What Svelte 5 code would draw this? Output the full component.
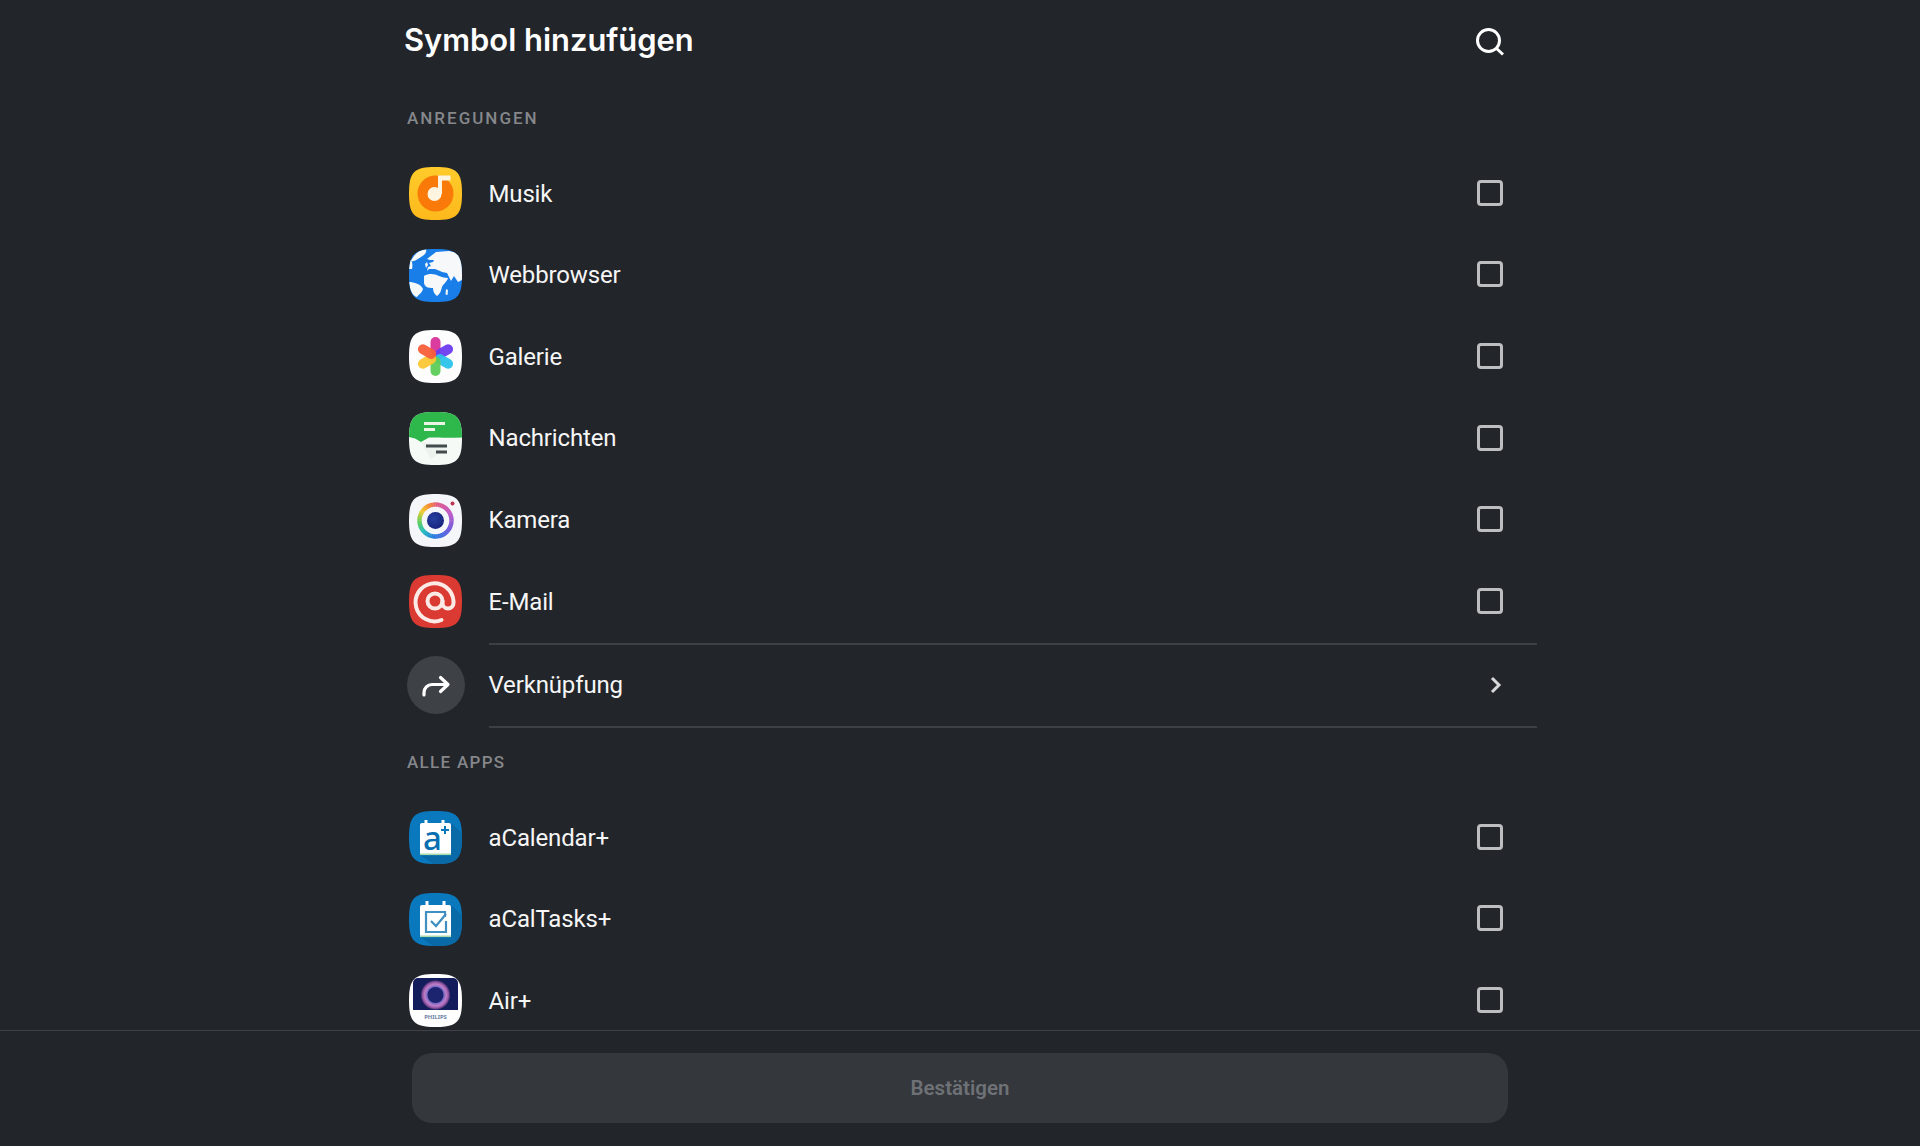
<script>
  const suggested = [
    { id: 'music', name: 'Musik' },
    { id: 'web', name: 'Webbrowser' },
    { id: 'gallery', name: 'Galerie' },
    { id: 'messages', name: 'Nachrichten' },
    { id: 'camera', name: 'Kamera' },
    { id: 'mail', name: 'E-Mail' }
  ];
  const apps = [
    { id: 'acal', name: 'aCalendar+' },
    { id: 'atasks', name: 'aCalTasks+' },
    { id: 'air', name: 'Air+' }
  ];
  const petals = [
    { a: 0, c: '#d9329b' },
    { a: 60, c: '#6b3cf0' },
    { a: 120, c: '#2cc3ea' },
    { a: 180, c: '#5dcc58' },
    { a: 240, c: '#fbc734' },
    { a: 300, c: '#f85f3a' }
  ];
  const stops = [
    [0, [226, 90, 130]], [60, [190, 90, 200]], [120, [110, 90, 220]], [180, [40, 120, 225]],
    [225, [40, 190, 190]], [260, [90, 205, 90]], [300, [240, 205, 50]], [335, [245, 135, 50]], [360, [226, 90, 130]]
  ];
  function colorAt(d) {
    for (let i = 1; i < stops.length; i++) {
      if (d <= stops[i][0]) {
        const [d0, c0] = stops[i - 1];
        const [d1, c1] = stops[i];
        const t = (d - d0) / (d1 - d0);
        return `rgb(${c0.map((v, k) => Math.round(v + (c1[k] - v) * t)).join(',')})`;
      }
    }
    return 'rgb(226,90,130)';
  }
  const ringSegments = Array.from({ length: 48 }, (_, i) => {
    const a0 = (i * 7.5 - 90) * Math.PI / 180;
    const a1 = ((i + 1.15) * 7.5 - 90) * Math.PI / 180;
    const r = 16;
    return {
      d: `M${26.5 + r * Math.cos(a0)} ${26.5 + r * Math.sin(a0)}A${r} ${r} 0 0 1 ${26.5 + r * Math.cos(a1)} ${26.5 + r * Math.sin(a1)}`,
      c: colorAt(i * 7.5)
    };
  });
</script>

<svg class="defs" width="0" height="0" aria-hidden="true">
  <defs>
    <clipPath id="sq"><path d="M0 26.5C0 5 5 0 26.5 0S53 5 53 26.5 48 53 26.5 53 0 48 0 26.5z" /></clipPath>
    <linearGradient id="gold" x1="0" y1="0" x2="0" y2="1"><stop offset="0" stop-color="#ffcb2b" /><stop offset="1" stop-color="#fdb91c" /></linearGradient>
    <radialGradient id="core" cx="0.4" cy="0.4" r="0.7"><stop offset="0" stop-color="#27409f" /><stop offset="1" stop-color="#16207a" /></radialGradient>
    <radialGradient id="glow" cx="0.5" cy="0.5" r="0.5">
      <stop offset="0.5" stop-color="#5f63c4" />
      <stop offset="0.72" stop-color="#c07fc8" />
      <stop offset="0.88" stop-color="#8a4f9c" />
      <stop offset="1" stop-color="#141d5c" />
    </radialGradient>
  </defs>
</svg>

{#snippet icon(id)}
  <svg class="app-icon" viewBox="0 0 53 53" aria-hidden="true">
    <g clip-path="url(#sq)">
      {#if id === 'music'}
        <rect width="53" height="53" fill="url(#gold)" />
        <circle cx="26.500" cy="26.500" r="18" fill="#f97a08" />
        <circle cx="25.500" cy="27" r="7" fill="#fff4e0" />
        <path d="M29 27V8.500h12.500v5H33V27z" fill="#fff4e0" />
      {:else if id === 'web'}
        <rect width="53" height="53" fill="#1a7ee8" />
        <g fill="#f6f8fa">
          <path d="M2 12C5 6 9 1 17 0c1 3-1 6-5 8S6 13 2 12z" />
          <path d="M0 9c3 2 4 6 3 11H0z" />
          <path d="M18 10l9-7 13-1 13 3v26l-4 2-4-6-3 5-4-8-5-1-2-1-5-2h-6l-2 2 1-4 3-1-2-3 4-1 1-2-4 0z" />
          <path d="M15 27c5-3 11-2 15 0 3 1 6 2 9 2-1 4-5 6-6 9s-1 6-5 9c-3-2-4-5-4-8-5 0-9-1-9-6 0-2 0-4 0-6z" />
          <path d="M0 33c5 0 12 2 14 7-1 4-4 5-6 8-4-1-7-6-8-15z" />
          <path d="M37 40l2 1-.5 5-2-.5z" />
          <path d="M16 15l2-2 1 3-2 3z" />
        </g>
      {:else if id === 'gallery'}
        <rect width="53" height="53" fill="#fdfdfd" />
        {#each petals as p}
          <rect x="21.500" y="7" width="10" height="19.500" rx="5" fill={p.c} opacity="0.95" transform="rotate({p.a} 26.500 26.500)" />
        {/each}
      {:else if id === 'messages'}
        <rect width="53" height="53" fill="#f6faf7" />
        <path d="M12 30l10 17 18-13z" fill="#ecf2ee" />
        <path d="M0 0H53V25.500C40 26 28 25.500 20 25.500L12 30 6 26.500 0 25z" fill="#2eb84b" />
        <path d="M15 11.500h21M15 17.500h11" stroke="#eaf5e6" stroke-width="3" fill="none" />
        <path d="M17 34h21M27 40h11" stroke="#434b4c" stroke-width="3" fill="none" />
      {:else if id === 'camera'}
        <rect width="53" height="53" fill="#f5f6f9" />
        {#each ringSegments as s}
          <path d={s.d} stroke={s.c} stroke-width="4.400" fill="none" />
        {/each}
        <circle cx="26.500" cy="26.500" r="8.500" fill="url(#core)" />
        <circle cx="43.500" cy="9.500" r="2" fill="#c2334f" />
      {:else if id === 'mail'}
        <rect width="53" height="53" fill="#da3a31" />
        <circle cx="26" cy="26" r="7.500" fill="none" stroke="#fbeae6" stroke-width="4" />
        <path d="M32.500 45A19 19 0 1 1 44.500 26v2a5 5 0 0 1-11 0V26" fill="none" stroke="#fbeae6" stroke-width="4" stroke-linecap="round" />
      {:else if id === 'acal'}
        <rect width="53" height="53" fill="#0a78bd" />
        <path d="M42 44 53 53H24L11 44zM42 12 53 22V53L42 44z" fill="#0a6aa8" />
        <path d="M17 12V9M34 12V9" stroke="#fff" stroke-width="3" />
        <rect x="11" y="12" width="31" height="32" rx="2" fill="#fff" />
        <rect x="11" y="42.500" width="31" height="1.600" fill="#a8dcae" />
        <text x="14" y="39" class="letter">a</text>
        <path d="M36 15v8M32 19h8" stroke="#0a78bd" stroke-width="2" />
      {:else if id === 'atasks'}
        <rect width="53" height="53" fill="#0a78bd" />
        <path d="M42 44 53 53H24L11 44zM42 12 53 22V53L42 44z" fill="#0a6aa8" />
        <path d="M18 12V8M35 12V8" stroke="#fff" stroke-width="3" />
        <rect x="11" y="12" width="31" height="32" rx="2" fill="#fff" />
        <rect x="11" y="42.500" width="31" height="1.600" fill="#a8dcae" />
        <path d="M36 24v-5H17v20h20V28" fill="none" stroke="#3f8fc0" stroke-width="2.200" />
        <path d="M22 28l5 5 10-12" fill="none" stroke="#3f8fc0" stroke-width="2.200" />
      {:else if id === 'air'}
        <rect width="53" height="53" fill="#fff" />
        <path d="M4 9a5 5 0 0 1 5-5h35a5 5 0 0 1 5 5v27H20C12 36 4 36 4 36z" fill="#141d5c" />
        <circle cx="26.500" cy="21" r="15" fill="url(#glow)" />
        <circle cx="26.500" cy="21" r="8" fill="#1c2470" />
        <text x="26.500" y="45" class="brand" text-anchor="middle">PHILIPS</text>
      {/if}
    </g>
  </svg>
{/snippet}

{#snippet row(item)}
  <div class="row">
    <span class="slot">{@render icon(item.id)}</span>
    <span class="name">{item.name}</span>
    <span class="check"></span>
  </div>
{/snippet}

<div class="page">
  <div class="main">
    <header class="head">
      <h1>Symbol hinzufügen</h1>
      <svg class="search" viewBox="0 0 30 30" aria-label="Suchen">
        <circle cx="13.500" cy="13.500" r="11" fill="none" stroke="#fff" stroke-width="3" />
        <path d="M21 21l7 6.500" stroke="#fff" stroke-width="3" fill="none" />
      </svg>
    </header>

    <h2 class="section first">ANREGUNGEN</h2>
    {#each suggested as item}
      {@render row(item)}
    {/each}

    <div class="sep"></div>
    <div class="row link">
      <span class="slot">
        <span class="round">
          <svg viewBox="0 0 58 58" width="58" height="58" aria-hidden="true">
            <path d="M17 39v-2.500a8 8 0 0 1 8-8h15" fill="none" stroke="#fff" stroke-width="3.200" stroke-linecap="round" />
            <path d="M33.500 21.500l7.500 7-7.500 7" fill="none" stroke="#fff" stroke-width="3.200" stroke-linecap="round" stroke-linejoin="round" />
          </svg>
        </span>
      </span>
      <span class="name">Verknüpfung</span>
      <svg class="chev" viewBox="0 0 12 18" aria-hidden="true">
        <path d="M2 2l7 7-7 7" fill="none" stroke="#d6d7d9" stroke-width="3" />
      </svg>
    </div>
    <div class="sep"></div>

    <h2 class="section second">ALLE APPS</h2>
    {#each apps as item}
      {@render row(item)}
    {/each}
  </div>

  <footer class="foot">
    <button class="confirm" disabled>Bestätigen</button>
  </footer>
</div>

<style>
  :global(body) {
    margin: 0;
    background: #22252a;
  }
  .defs {
    position: absolute;
  }
  .page {
    height: 1146px;
    display: flex;
    flex-direction: column;
    background: #22252a;
    color: #f6f6f6;
    font-family: Roboto, sans-serif;
    overflow: hidden;
  }
  .main {
    flex: 1;
    min-height: 0;
    overflow: hidden;
    padding: 0 383px 0 404px;
  }
  .head {
    height: 80px;
    display: flex;
    align-items: center;
    justify-content: space-between;
    padding-right: 32px;
  }
  h1 {
    margin: 0 0 2px;
    font-family: Inter, sans-serif;
    font-size: 30.900px;
    font-weight: 600;
    color: #fff;
  }
  .search {
    width: 30px;
    height: 30px;
    margin-top: 4px;
  }
  .section {
    margin: 0;
    display: flex;
    align-items: center;
    padding-left: 3px;
    font-size: 17px;
    font-weight: 500;
    letter-spacing: 1.300px;
    color: #85878b;
  }
  .first {
    height: 72.700px;
    box-sizing: border-box;
    padding-top: 3px;
    letter-spacing: 2px;
  }
  .second {
    height: 68.800px;
    box-sizing: border-box;
    padding-bottom: 1px;
  }
  .row {
    height: 81.670px;
    display: flex;
    align-items: center;
  }
  .link {
    height: 81.300px;
  }
  .slot {
    width: 84.500px;
    flex: none;
    display: flex;
    align-items: center;
  }
  .app-icon {
    width: 53px;
    height: 53px;
    margin-left: 5px;
    display: block;
  }
  .letter {
    font-family: "Noto Sans", sans-serif;
    font-size: 33px;
    font-weight: 500;
    fill: #0a6fb0;
  }
  .brand {
    font-family: "Noto Sans", sans-serif;
    font-size: 5.800px;
    font-weight: 700;
    fill: #6c7ea6;
  }
  .round {
    width: 58px;
    height: 58px;
    margin-left: 3px;
    border-radius: 50%;
    background: #3e4146;
    display: block;
  }
  .round svg {
    display: block;
  }
  .name {
    flex: 1;
    font-size: 24px;
    line-height: 30px;
    letter-spacing: -0.15px;
  }
  .check {
    width: 26px;
    height: 26px;
    box-sizing: border-box;
    border: 3px solid #bdbec0;
    border-radius: 4px;
    margin: 0 34px 1.500px 0;
    flex: none;
  }
  .chev {
    width: 12px;
    height: 18px;
    margin-right: 35px;
    flex: none;
  }
  .sep {
    height: 2px;
    margin-left: 84.500px;
    background: #3d4045;
  }
  .foot {
    flex: none;
    height: 116px;
    box-sizing: border-box;
    border-top: 1.500px solid #3d4045;
    padding: 22px 412px 0;
  }
  .confirm {
    display: block;
    width: 100%;
    height: 70px;
    border: 0;
    border-radius: 20px;
    background: #34373c;
    color: #6e7175;
    font-family: Roboto, sans-serif;
    font-size: 20.500px;
    font-weight: 600;
  }
</style>
